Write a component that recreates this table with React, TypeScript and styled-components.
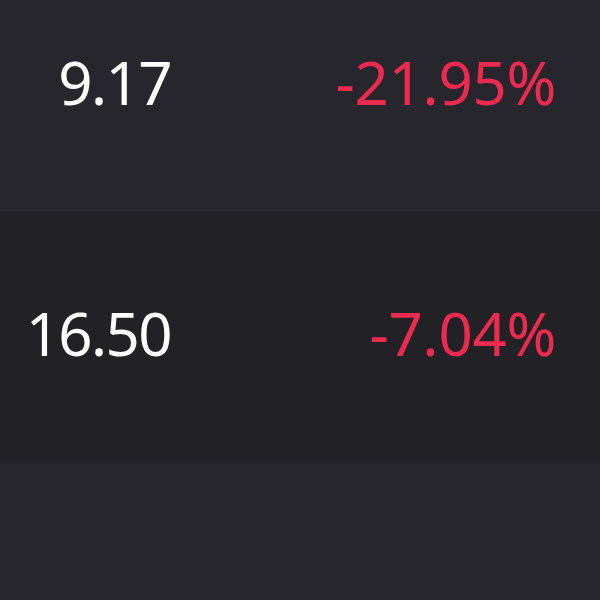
import React from "react";
import styled, { createGlobalStyle } from "styled-components";

const Global = createGlobalStyle`
  html, body { margin: 0; padding: 0; background: #27262c; }
  body { width: 600px; height: 600px; overflow: hidden; }
`;

const Table = styled.div`
  display: flex;
  flex-direction: column;
  margin-top: -40px;
  font-family: "Noto Sans", "Open Sans", sans-serif;
`;

const Row = styled.div<{ $alt?: boolean }>`
  display: grid;
  grid-template-columns: 171px 1fr;
  align-items: center;
  height: 251px;
  padding-right: 44px;
  padding-bottom: 8px;
  box-sizing: border-box;
  background: ${(p) => (p.$alt ? "#222126" : "#27262c")};
`;

const Price = styled.div`
  text-align: right;
  color: #ffffff;
  font-size: 60px;
  letter-spacing: -1.6px;
  line-height: 1;
`;

const Change = styled.div`
  text-align: right;
  color: #ec2a4f;
  font-size: 60px;
  letter-spacing: -0.3px;
  line-height: 1;
`;

const rows = [
  { price: "9.17", change: "-21.95%" },
  { price: "16.50", change: "-7.04%" },
  { price: "", change: "" },
];

export default function App() {
  return (
    <>
      <Global />
      <Table>
        {rows.map((r, i) => (
          <Row key={i} $alt={i % 2 === 1}>
            <Price>{r.price}</Price>
            <Change>{r.change}</Change>
          </Row>
        ))}
      </Table>
    </>
  );
}
